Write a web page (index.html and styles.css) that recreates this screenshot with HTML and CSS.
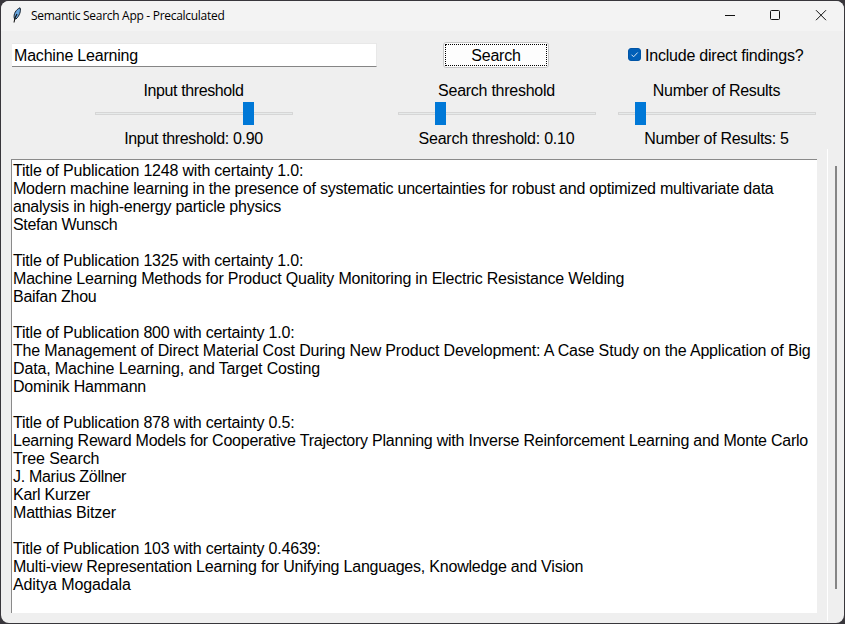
FILE: index.html
```html
<!DOCTYPE html>
<html lang="en">
<head>
<meta charset="utf-8">
<title>Semantic Search App - Precalculated</title>
<link rel="stylesheet" href="styles.css">
</head>
<body>
<div class="window">
  <header class="titlebar">
    <svg class="feather" viewBox="0 0 10 16" width="10" height="16"><path d="M2.300 11.500C1.200 7 4 2.500 8 .8C9.300 3.500 7.500 9 4 12Z" fill="#68a5dd" stroke="#15202c" stroke-width="1"/><path d="M2 15.500L3 11L5 7" fill="none" stroke="#111" stroke-width="1.100"/></svg>
    <h1 class="title">Semantic Search App - Precalculated</h1>
    <svg class="controls" viewBox="0 0 104 12" width="104" height="12" fill="none" stroke="#111" stroke-width="1"><path d="M1 6.5H11" /><rect x="46.500" y="1.500" width="9" height="9" rx="1"/><path d="M92 1.200L102 11.200M102 1.200L92 11.200"/></svg>
  </header>
  <main class="content">
    <section class="form">
      <div class="query">Machine Learning</div>
      <button class="search"><span>Search</span></button>
      <label class="check"><svg viewBox="0 0 13 13" width="13" height="13"><rect x=".5" y=".5" width="12" height="12" rx="2.500" fill="#005fb8" stroke="#0054a6"/><path d="M3.500 6.700L5.600 8.800L9.700 4.500" fill="none" stroke="#d5e6f5"/></svg><span>Include direct findings?</span></label>
      <div class="scale">
        <div class="label t40">Input threshold</div>
        <div class="track"><i class="thumb high"></i></div>
        <div class="label t35">Input threshold: 0.90</div>
      </div>
      <div class="scale">
        <div class="label t25">Search threshold</div>
        <div class="track"><i class="thumb low"></i></div>
        <div class="label t23">Search threshold: 0.10</div>
      </div>
      <div class="scale">
        <div class="label t30">Number of Results</div>
        <div class="track"><i class="thumb few"></i></div>
        <div class="label t30">Number of Results: 5</div>
      </div>
    </section>
    <section class="output">
      <div class="results">
        <p>Title of Publication 1248 with certainty 1.0:<br><span class="t22">Modern machine learning in the presence of systematic uncertainties for robust and optimized multivariate data</span><br><span class="t23">analysis in high-energy particle physics</span><br><span class="t30">Stefan Wunsch</span></p>
        <p>Title of Publication 1325 with certainty 1.0:<br>Machine Learning Methods for Product Quality Monitoring in Electric Resistance Welding<br><span class="t25">Baifan Zhou</span></p>
        <p>Title of Publication 800 with certainty 1.0:<br><span class="t16">The Management of Direct Material Cost During New Product Development: A Case Study on the Application of Big</span><br><span class="t14">Data, Machine Learning, and Target Costing</span><br>Dominik Hammann</p>
        <p>Title of Publication 878 with certainty 0.5:<br><span class="t23">Learning Reward Models for Cooperative Trajectory Planning with Inverse Reinforcement Learning and Monte Carlo</span><br><span class="t10">Tree Search</span><br><span class="t30">J. Marius Zöllner</span><br><span class="t25">Karl Kurzer</span><br>Matthias Bitzer</p>
        <p>Title of Publication 103 with certainty 0.4639:<br><span class="t21">Multi-view Representation Learning for Unifying Languages, Knowledge and Vision</span><br><span class="t10">Aditya Mogadala</span></p>
      </div>
      <div class="scrollbar"><div class="bar"></div></div>
    </section>
  </main>
</div>
</body>
</html>
```
FILE: styles.css
```css
* { box-sizing: border-box; }
body {
  margin: 0;
  width: 845px;
  height: 624px;
  overflow: hidden;
  background: #38363b;
  color: #000;
  font: 16px/18px "Liberation Sans", Arial, sans-serif;
  letter-spacing: -0.2px;
}
.window {
  display: flex;
  flex-direction: column;
  width: 843px;
  height: 622px;
  margin: 1px;
  border-radius: 8px;
  background: #efefef;
  overflow: hidden;
}
.titlebar {
  display: flex;
  align-items: center;
  flex: none;
  height: 30px;
  padding: 0 16px 0 11px;
  background: #f3f3f3;
}
.feather { margin-top: -2px; }
.title {
  margin: 0 auto 0 9px;
  font: 12px/16px "Open Sans", "Noto Sans", sans-serif;
  letter-spacing: -0.29px;
}
.controls { margin-top: -2px; }
.content { flex: 1; padding: 11px 0 0 10px; }
.form {
  display: grid;
  grid-template-columns: 364px 198px 198px;
  grid-template-rows: 26px 80px;
  column-gap: 22px;
  row-gap: 13px;
  padding-left: 1px;
  align-items: center;
}
.query {
  height: 24px;
  margin-right: -1px;
  padding: 3px 2px;
  border: 1px solid #e8e8e8;
  border-width: 1px 1px 1px 0;
  border-bottom-color: #858585;
  background: #fff;
}
.search {
  justify-self: center;
  width: 106px;
  height: 26px;
  margin-right: 2px;
  padding: 1px;
  border: 1px solid #c6c6c6;
  border-radius: 3px;
  background: #fdfdfd;
  color: #000;
  font: inherit;
  letter-spacing: inherit;
}
.search span { display: block; height: 22px; line-height: 21px; border: 1px dotted #000; }
.check { display: flex; align-items: center; gap: 4px; padding-left: 10px; white-space: nowrap; letter-spacing: -0.22px; }
.check svg { margin-top: -1px; }
.check span { padding-top: 2px; }
.scale { align-self: start; width: 198px; justify-self: center; }
.label { height: 18px; line-height: 20px; padding-right: 1px; text-align: center; white-space: nowrap; }
.track {
  height: 3px;
  margin: 13px 0 14px;
  border: 1px solid #d6d6d6;
  background: #e7eaea;
  position: relative;
}
.thumb { position: absolute; top: -11px; width: 11px; height: 23px; background: #0078d7; }
.high { left: 147px; }
.low { left: 36px; }
.few { left: 16px; }
.output { display: flex; height: 472px; margin-top: -12px; }
.results {
  width: 806px;
  height: 454px;
  margin-top: 10px;
  padding: 2px 0 0 1px;
  border-top: 1px solid #8a8a8a;
  border-left: 1px solid #8a8a8a;
  background: #fff;
  white-space: nowrap;
}
.results p { margin: 0 0 18px; }
.scrollbar { width: 16px; margin-left: 10px; border-left: 1px solid #fff; }
.bar { width: 2px; height: 423px; margin: 17px 0 0 7px; background: #858585; }
.t10 { letter-spacing: -0.1px; }
.t14 { letter-spacing: -0.14px; }
.t16 { letter-spacing: -0.165px; }
.t21 { letter-spacing: -0.21px; }
.t22 { letter-spacing: -0.225px; }
.t23 { letter-spacing: -0.235px; }
.t25 { letter-spacing: -0.26px; }
.t30 { letter-spacing: -0.3px; }
.t35 { letter-spacing: -0.35px; }
.t40 { letter-spacing: -0.4px; }
```
